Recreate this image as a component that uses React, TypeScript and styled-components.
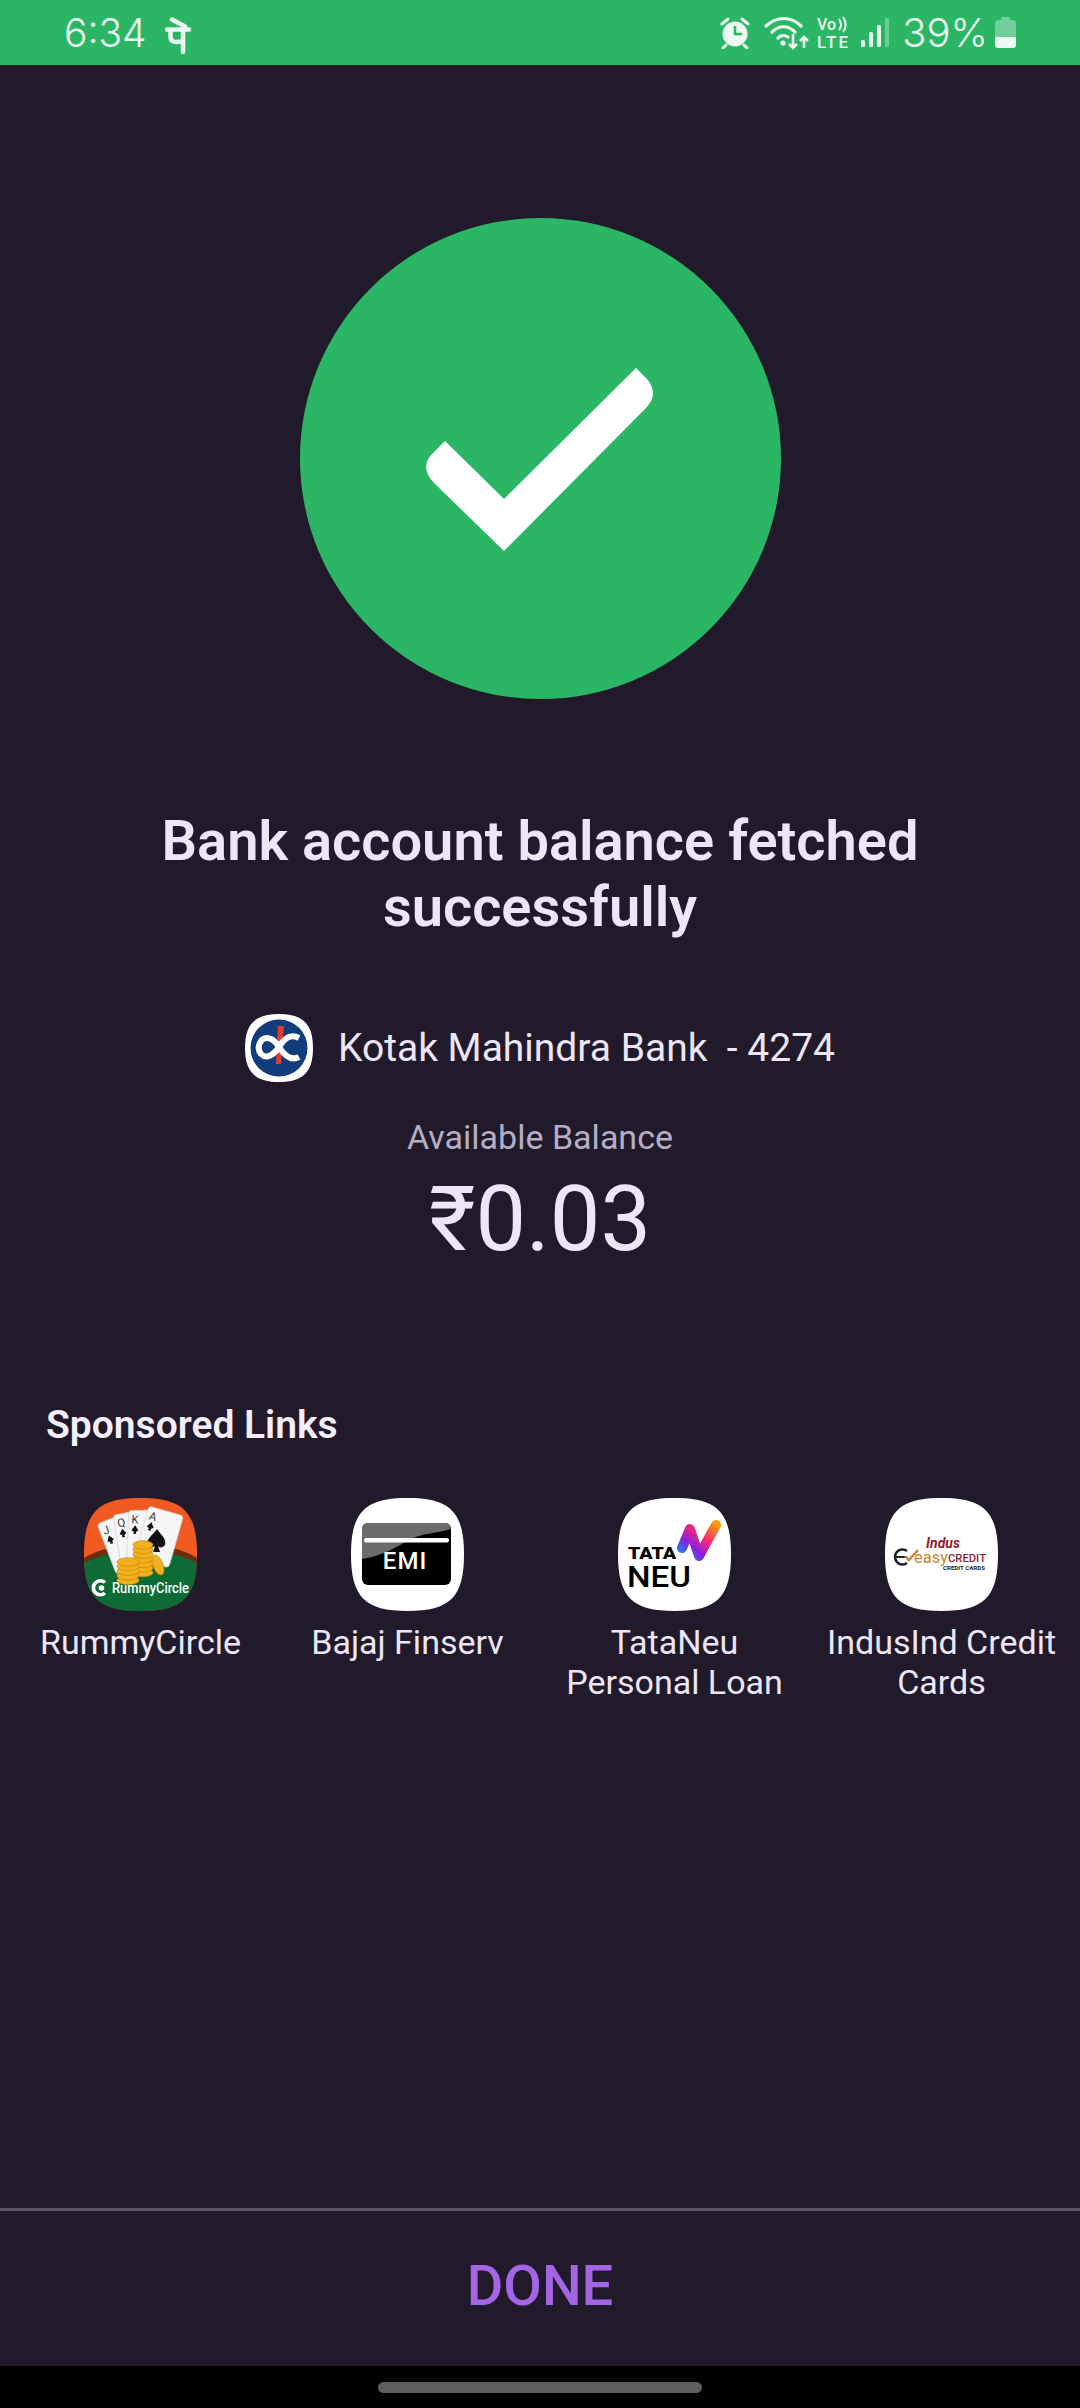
import React from "react";
import styled, { createGlobalStyle } from "styled-components";

const Global = createGlobalStyle`
  html, body { margin: 0; padding: 0; background: #201a2b; }
  * { box-sizing: border-box; }
`;

const Screen = styled.div`
  width: 1080px;
  height: 2408px;
  display: flex;
  flex-direction: column;
  background: #201a2b;
  font-family: Roboto, "Noto Sans", sans-serif;
  overflow: hidden;
`;

const StatusBar = styled.div`
  height: 65px;
  flex: none;
  background: #2ab665;
  display: flex;
  align-items: center;
  padding: 0 64px 0 64px;
  color: #ecfaf2;
  font-family: Inter, Roboto, sans-serif;
  font-size: 39px;
  font-weight: 300;
`;

const Clock = styled.span`
  width: 101px;
`;

const StatusRight = styled.div`
  margin-left: auto;
  display: flex;
  align-items: center;
`;

const StatusIcon = styled.svg<{ $gap?: number; $top?: number }>`
  flex: none;
  display: block;
  margin-right: ${(p) => p.$gap ?? 0}px;
  margin-top: ${(p) => p.$top ?? 0}px;
`;

const Percent = styled.span`
  margin: 0 7px 0 13px;
  font-size: 40px;
`;

const Main = styled.main`
  flex: 1;
  display: flex;
  flex-direction: column;
  align-items: center;
  padding-top: 153px;
`;

const SuccessCircle = styled.div`
  width: 481px;
  height: 481px;
  border-radius: 50%;
  background: #2ab665;
  flex: none;
`;

const Title = styled.h1`
  margin: 109px 0 0;
  width: 900px;
  text-align: center;
  font-size: 56px;
  line-height: 66px;
  font-weight: 600;
  color: #ede6f8;
`;

const BankRow = styled.div`
  margin-top: 74px;
  display: flex;
  align-items: center;
  gap: 25px;
  color: #ede6f8;
  font-size: 39px;
  white-space: pre;
`;

const BalanceLabel = styled.div`
  margin-top: 35px;
  font-size: 34px;
  line-height: 40px;
  color: #b5aec6;
`;

const BalanceValue = styled.div`
  margin-top: 10px;
  font-size: 90px;
  line-height: 106px;
  font-weight: 400;
  color: #ede6f8;
`;

const Sponsored = styled.section`
  align-self: stretch;
  margin-top: 130px;
  padding: 0 5px 0 7px;
`;

const SponsoredTitle = styled.h2`
  margin: 0 0 0 39px;
  font-size: 39px;
  line-height: 44px;
  font-weight: 600;
  color: #f4effb;
`;

const AppGrid = styled.div`
  margin-top: 51px;
  display: grid;
  grid-template-columns: repeat(4, 1fr);
`;

const AppItem = styled.div`
  display: flex;
  flex-direction: column;
  align-items: center;
  text-align: center;
`;

const AppLabel = styled.div`
  margin-top: 11px;
  font-size: 34px;
  line-height: 40px;
  color: #ede6f8;
`;

const Footer = styled.footer`
  flex: none;
  height: 158px;
  border-top: 3px solid #5b5169;
  padding-bottom: 6px;
  display: flex;
  align-items: center;
  justify-content: center;
  color: #a464e6;
  font-size: 56px;
  font-weight: 500;
`;

const NavBar = styled.div`
  flex: none;
  height: 42px;
  background: #000;
  display: flex;
  justify-content: center;
  padding-top: 16px;
`;

const NavPill = styled.div`
  width: 324px;
  height: 11px;
  border-radius: 6px;
  background: #5e5e5e;
`;

const IconSvg = styled.svg`
  flex: none;
  display: block;
`;

const SQUIRCLE = "M56.5 0C99 0 113 14 113 56.5C113 99 99 113 56.5 113C14 113 0 99 0 56.5C0 14 14 0 56.5 0Z";

const Squircle: React.FC<{ id: string; children: React.ReactNode }> = ({ id, children }) => (
  <IconSvg width={113} height={113} viewBox="0 0 113 113">
    <defs>
      <clipPath id={id}>
        <path d={SQUIRCLE} />
      </clipPath>
    </defs>
    <g clipPath={`url(#${id})`}>{children}</g>
  </IconSvg>
);

const PheIcon = () => (
  <StatusIcon width="26" height="38" viewBox="0 0 26 38" fill="none" stroke="#ecfaf2" strokeWidth="4.5" $top={7}>
    <path d="M2 12.5H24" strokeLinecap="round" />
    <path d="M18 13V35" strokeLinecap="round" />
    <path d="M5.5 13V20C5.5 25 10 26 18 24" />
    <path d="M7 2.5L20 9.5" strokeLinecap="round" />
  </StatusIcon>
);

const AlarmIcon = () => (
  <StatusIcon width="30" height="32" viewBox="0 0 30 32" $gap={14}>
    <circle cx="15" cy="17" r="12.5" fill="#ecfaf2" />
    <path d="M15 9V17H22" fill="none" stroke="#2ab665" strokeWidth="2.6" />
    <path d="M2 7L8 2M28 7L22 2M6 28L3 31M24 28L27 31" stroke="#ecfaf2" strokeWidth="3" strokeLinecap="round" />
  </StatusIcon>
);

const WifiIcon = () => (
  <StatusIcon width="46" height="34" viewBox="0 0 46 34" fill="none" $gap={7}>
    <path d="M2 10C13 0 27 0 37 10" stroke="#ecfaf2" strokeWidth="3.2" strokeLinecap="round" />
    <path d="M8 16C15 9 24 9 31 16" stroke="#ecfaf2" strokeWidth="3.2" strokeLinecap="round" />
    <path d="M14 22C17 19 21 19 24 21" stroke="#ecfaf2" strokeWidth="3.2" strokeLinecap="round" />
    <circle cx="19" cy="27" r="2.6" fill="#ecfaf2" />
    <path d="M29 18V32M25 28L29 32L33 28M40 32V21M36 25L40 21L44 25" stroke="#ecfaf2" strokeWidth="2.6" />
  </StatusIcon>
);

const VoLteIcon = () => (
  <StatusIcon width="32" height="34" viewBox="0 0 32 34" $gap={12}>
    <text x="0" y="14" fontFamily="Roboto, sans-serif" fontSize="16" fontWeight="500" fill="#ecfaf2">Vo</text>
    <path d="M22 3C24.5 7 24.5 11 22 14M26 1C29.5 6 29.5 12 26 16" fill="none" stroke="#ecfaf2" strokeWidth="2" />
    <text x="0" y="32" fontFamily="Roboto, sans-serif" fontSize="17" fontWeight="500" fill="#ecfaf2" textLength="31">LTE</text>
  </StatusIcon>
);

const SignalIcon = () => (
  <StatusIcon width="28" height="30" viewBox="0 0 28 30">
    <rect x="0" y="22" width="4" height="7" rx="1.5" fill="#ecfaf2" />
    <rect x="8" y="14" width="4" height="15" rx="1.5" fill="#ecfaf2" />
    <rect x="16" y="7" width="4" height="22" rx="1.5" fill="#ecfaf2" />
    <rect x="24" y="0" width="4" height="29" rx="1.5" fill="#ecfaf2" opacity="0.35" />
  </StatusIcon>
);

const BatteryIcon = () => (
  <StatusIcon width="21" height="31" viewBox="0 0 21 31">
    <rect x="6" y="0" width="9" height="4" rx="1.5" fill="#72cf9b" />
    <rect x="0" y="3" width="21" height="28" rx="3.5" fill="#72cf9b" />
    <path d="M0 20H21V27.5A3.5 3.5 0 0 1 17.5 31H3.5A3.5 3.5 0 0 1 0 27.5Z" fill="#ecfaf2" />
  </StatusIcon>
);

const CheckIcon = () => (
  <IconSvg width="481" height="481" viewBox="300 218 481 481">
    <path
      d="M636 368L646 378Q660 393 646 408L504 551L434 483Q420 468 431 455L445 441L504 499Z"
      fill="#fff"
    />
  </IconSvg>
);

const KotakLogo = () => (
  <IconSvg width="68" height="68" viewBox="0 0 68 68">
    <path d="M34 0C58 0 68 10 68 34C68 58 58 68 34 68C10 68 0 58 0 34C0 10 10 0 34 0Z" fill="#fff" />
    <circle cx="34" cy="34" r="28.5" fill="#123d7c" />
    <path d="M33 12H39L37.5 30L36 50H31L32 30Z" fill="#e23b2e" />
    <path
      d="M54 24C46 20 40 23 34 33C28 42 21 45 16 40C11 34 15 24 22 24C27 24 31 28 34 33C39 41 46 47 54 43"
      fill="none"
      stroke="#fff"
      strokeWidth="6"
    />
  </IconSvg>
);

const Card: React.FC<{ rotate: number; x: number; y: number; letter: string }> = ({ rotate, x, y, letter }) => (
  <g transform={`translate(${x} ${y}) rotate(${rotate})`}>
    <rect x="0" y="0" width="36" height="54" rx="3.5" fill="#f6f6f6" stroke="#c9c9c9" strokeWidth="0.6" />
    <text x="3" y="13" fontFamily="Roboto, sans-serif" fontSize="11.5" fill="#3a3a3a">{letter}</text>
    <path d="M7 15L10.5 20L8 21.5L8.5 23.5H5.5L6 21.5L3.5 20Z" fill="#111" />
  </g>
);

const CoinStack: React.FC<{ cx: number; rx: number; top: number; count: number }> = ({ cx, rx, top, count }) => (
  <g>
    {Array.from({ length: count }, (_, i) => count - 1 - i).map((i) => (
      <ellipse key={i} cx={cx} cy={top + i * 4.6} rx={rx} ry={4.2} fill="#f2b01e" stroke="#c98a0c" strokeWidth="0.7" />
    ))}
  </g>
);

const RummyIcon = () => (
  <Squircle id="rummy">
    <rect width="113" height="113" fill="#f05a22" />
    <path d="M0 60C30 42 85 42 113 60V113H0Z" fill="#6e2c10" />
    <path d="M0 65C30 49 85 49 113 65V113H0Z" fill="#0d6b35" />
    <Card rotate={-21} x={13} y={26} letter="J" />
    <Card rotate={-9} x={29} y={17} letter="Q" />
    <Card rotate={3} x={45} y={12} letter="K" />
    <Card rotate={16} x={65} y={8} letter="A" />
    <path d="M73 31C77 37 83 41 81 47C79 50 75 50 74 48L76 54H69L71 48C69 50 65 50 63 47C62 41 69 37 73 31Z" fill="#111" />
    <CoinStack cx={59} rx={10} top={47} count={7} />
    <CoinStack cx={44} rx={11} top={64} count={5} />
    <ellipse cx="74" cy="67" rx="5" ry="10.5" transform="rotate(-22 74 67)" fill="#f2b01e" stroke="#c98a0c" strokeWidth="0.7" />
    <path d="M21 84.5A7 7 0 1 0 21 95" fill="none" stroke="#fff" strokeWidth="3.6" />
    <circle cx="17.5" cy="90" r="2.8" fill="#fff" />
    <text x="28" y="95" fontFamily="Roboto, sans-serif" fontSize="15" fontWeight="500" fill="#fff" textLength="77" lengthAdjust="spacingAndGlyphs">RummyCircle</text>
  </Squircle>
);

const EmiIcon = () => (
  <Squircle id="emi">
    <rect width="113" height="113" fill="#fff" />
    <rect x="11" y="25" width="89" height="62" rx="6" fill="#000" />
    <path d="M11 31A6 6 0 0 1 17 25H94A6 6 0 0 1 100 31C88 35 70 35 58 42C44 50 30 58 11 61Z" fill="#6b6b6b" />
    <rect x="13" y="40" width="85" height="4.5" rx="2.2" fill="#fff" />
    <text x="54" y="71" textAnchor="middle" fontFamily="Roboto, sans-serif" fontSize="24" fontWeight="500" letterSpacing="1" fill="#fff">EMI</text>
  </Squircle>
);

const NeuIcon = () => (
  <Squircle id="neu">
    <defs>
      <linearGradient id="neuStroke" x1="0" y1="1" x2="1" y2="0">
        <stop offset="0" stopColor="#1c8cf0" />
        <stop offset="0.3" stopColor="#8a1ee0" />
        <stop offset="0.6" stopColor="#f0287a" />
        <stop offset="1" stopColor="#ff9a0a" />
      </linearGradient>
    </defs>
    <rect width="113" height="113" fill="#fff" />
    <path d="M64 50L72 31L81 58L98 27" fill="none" stroke="url(#neuStroke)" strokeWidth="10" strokeLinecap="round" strokeLinejoin="round" />
    <text x="10" y="61" fontFamily="Roboto, sans-serif" fontSize="17" fontWeight="900" fill="#000" textLength="48" lengthAdjust="spacingAndGlyphs">TATA</text>
    <text x="9" y="89" fontFamily="Roboto, sans-serif" fontSize="30" fontWeight="500" fill="#000" textLength="64" lengthAdjust="spacingAndGlyphs">NEU</text>
  </Squircle>
);

const IndusIcon = () => (
  <Squircle id="indus">
    <rect width="113" height="113" fill="#fff" />
    <text x="58" y="50" textAnchor="middle" fontFamily="Roboto, sans-serif" fontSize="14" fontWeight="700" fontStyle="italic" fill="#8f1d2c">Indus</text>
    <path d="M22 53A7.5 7.5 0 1 0 22 65" fill="none" stroke="#222" strokeWidth="2.6" />
    <path d="M10 59H20" fill="none" stroke="#222" strokeWidth="1.8" />
    <path d="M20 58L24 62L33 52" fill="none" stroke="#c9852f" strokeWidth="2.4" />
    <text x="29" y="65" fontFamily="Roboto, sans-serif" fontSize="17" fill="#c9852f" textLength="34" lengthAdjust="spacingAndGlyphs">easy</text>
    <text x="63" y="64" fontFamily="Roboto, sans-serif" fontSize="10.5" fontWeight="500" fill="#8f1d2c" textLength="38" lengthAdjust="spacingAndGlyphs">CREDIT</text>
    <text x="58" y="71.5" fontFamily="Roboto, sans-serif" fontSize="4.8" fontWeight="700" fill="#222" textLength="42" lengthAdjust="spacingAndGlyphs">CREDIT CARDS</text>
  </Squircle>
);

const apps: { icon: React.ReactNode; label: React.ReactNode }[] = [
  { icon: <RummyIcon />, label: "RummyCircle" },
  { icon: <EmiIcon />, label: "Bajaj Finserv" },
  { icon: <NeuIcon />, label: <>TataNeu<br />Personal Loan</> },
  { icon: <IndusIcon />, label: <>IndusInd Credit<br />Cards</> },
];

export default function App() {
  return (
    <Screen>
      <Global />
      <StatusBar>
        <Clock>6:34</Clock>
        <PheIcon />
        <StatusRight>
          <AlarmIcon />
          <WifiIcon />
          <VoLteIcon />
          <SignalIcon />
          <Percent>39%</Percent>
          <BatteryIcon />
        </StatusRight>
      </StatusBar>
      <Main>
        <SuccessCircle>
          <CheckIcon />
        </SuccessCircle>
        <Title>Bank account balance fetched successfully</Title>
        <BankRow>
          <KotakLogo />
          <span>{"Kotak Mahindra Bank  - 4274"}</span>
        </BankRow>
        <BalanceLabel>Available Balance</BalanceLabel>
        <BalanceValue>₹0.03</BalanceValue>
        <Sponsored>
          <SponsoredTitle>Sponsored Links</SponsoredTitle>
          <AppGrid>
            {apps.map((a, i) => (
              <AppItem key={i}>
                {a.icon}
                <AppLabel>{a.label}</AppLabel>
              </AppItem>
            ))}
          </AppGrid>
        </Sponsored>
      </Main>
      <Footer>DONE</Footer>
      <NavBar>
        <NavPill />
      </NavBar>
    </Screen>
  );
}
